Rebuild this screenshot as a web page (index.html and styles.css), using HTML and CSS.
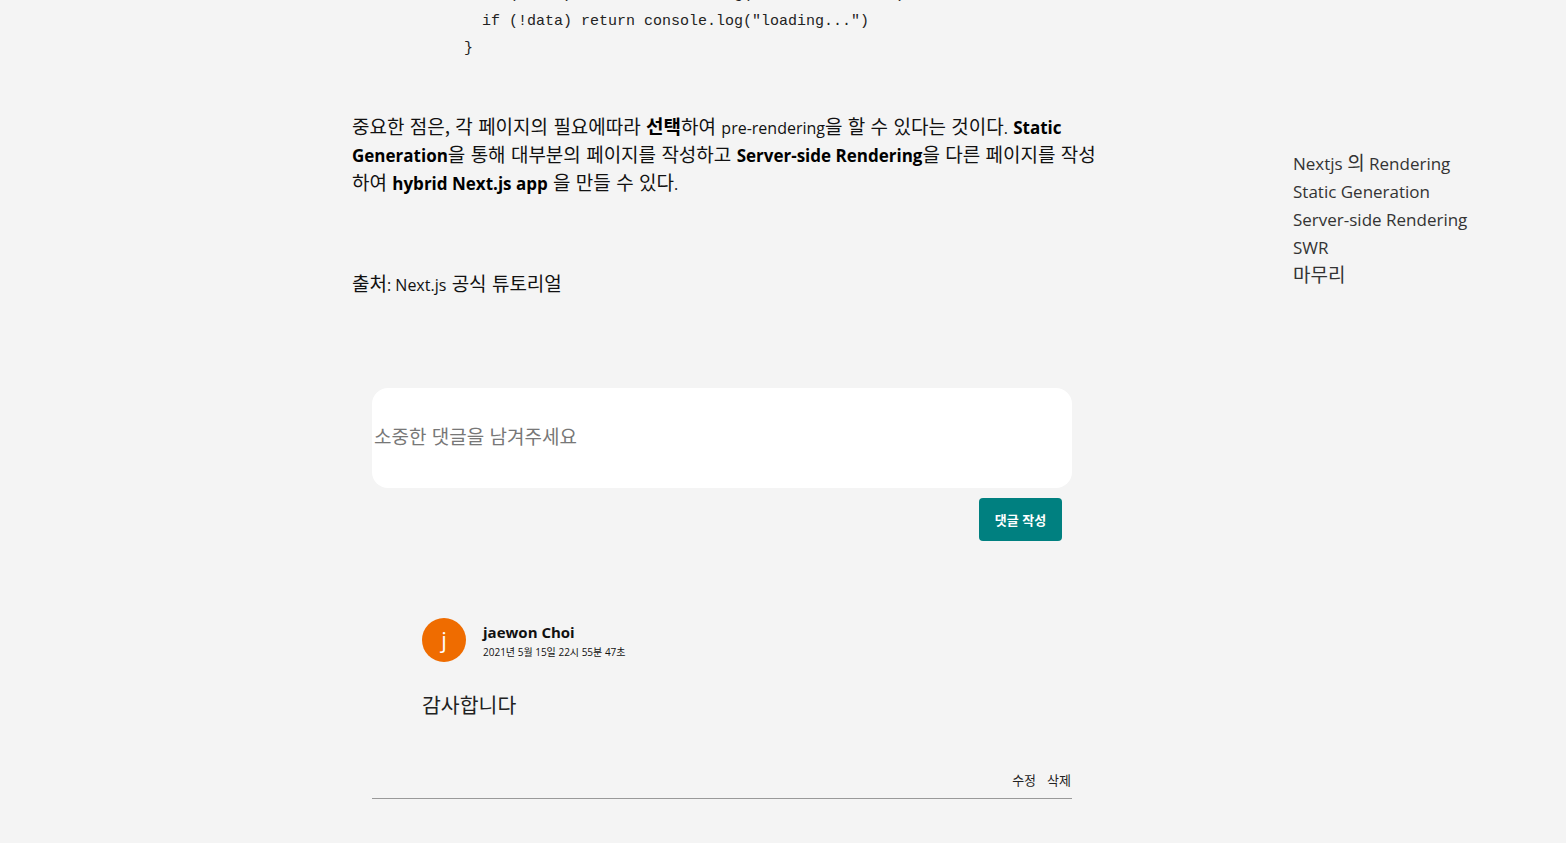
FILE: index.html
```html
<!DOCTYPE html>
<html lang="ko">
<head>
<meta charset="utf-8">
<title>Next.js Rendering</title>
<link rel="stylesheet" href="styles.css">
</head>
<body>
<div class="layout">
  <main class="main">
    <pre class="code">  if (error) return console.log("failed to load")
  if (!data) return console.log("loading...")
}</pre>
    <p class="para">중요한 점은, 각 페이지의 필요에따라 <strong>선택</strong>하여 <span class="en">pre-rendering</span>을 할 수 있다는 것이다<span class="en">.</span> <strong class="en">Static Generation</strong>을 통해 대부분의 페이지를 작성하고 <strong class="en">Server-side Rendering</strong>을 다른 페이지를 작성하여 <strong class="en">hybrid Next.js app</strong> 을 만들 수 있다<span class="en">.</span></p>
    <p class="para source">출처<span class="en">: Next.js</span> 공식 튜토리얼</p>

    <section class="comments">
      <textarea class="comment-input" placeholder="소중한 댓글을 남겨주세요"></textarea>
      <div class="submit-row">
        <button class="submit-btn">댓글 작성</button>
      </div>

      <div class="comment">
        <div class="comment-head">
          <div class="avatar">j</div>
          <div class="meta">
            <div class="author">jaewon Choi</div>
            <div class="date">2021년 5월 15일 22시 55분 47초</div>
          </div>
        </div>
        <div class="comment-body">감사합니다</div>
        <div class="comment-actions">
          <span>수정</span>
          <span>삭제</span>
        </div>
      </div>
    </section>
  </main>
  <aside class="toc">
    <a>Nextjs <span class="ko">의</span> Rendering</a>
    <a>Static Generation</a>
    <a>Server-side Rendering</a>
    <a>SWR</a>
    <a><span class="ko">마무리</span></a>
  </aside>
</div>
</body>
</html>
```
FILE: styles.css
```css
html, body {
  margin: 0;
  padding: 0;
  background: #f4f4f4;
  color: #222;
  font-family: "Open Sans", "Noto Sans CJK KR", sans-serif;
  overflow: hidden;
}

.layout {
  display: flex;
  padding-left: 352px;
}

.main {
  width: 760px;
  flex: none;
}

.code {
  margin: -19px 0 0 0;
  padding: 0 0 0 112px;
  font-family: "Liberation Mono", monospace;
  font-size: 15px;
  line-height: 27px;
  color: #222;
}

.para {
  margin: 50px 0 0 0;
  font-family: "Noto Sans CJK KR", sans-serif;
  font-size: 19px;
  line-height: 28px;
  color: #111;
}

.para .en,
.para strong {
  line-height: 1;
}

.para .en {
  font-family: "Open Sans", sans-serif;
  font-size: 16px;
}

.para strong {
  font-weight: 700;
  color: #000;
}

.para strong.en {
  font-size: 17px;
}

.source {
  margin-top: 73px;
}

.comments {
  margin: 91px 0 0 20px;
  width: 700px;
}

.comment-input {
  display: block;
  box-sizing: border-box;
  width: 700px;
  height: 100px;
  border: none;
  border-radius: 16px;
  background: #fff;
  padding: 34px 2px 0;
  font-family: "Noto Sans CJK KR", sans-serif;
  font-size: 19px;
  resize: none;
  outline: none;
}

.comment-input::placeholder {
  color: #777;
}

.submit-row {
  display: flex;
  justify-content: flex-end;
  padding: 10px 10px 0 0;
}

.submit-btn {
  width: 83px;
  height: 43px;
  border: none;
  border-radius: 4px;
  background: #008080;
  color: #fff;
  font-family: "Noto Sans CJK KR", sans-serif;
  font-weight: 700;
  font-size: 13px;
}

.comment {
  margin-top: 77px;
}

.comment-head {
  display: flex;
  align-items: center;
  padding-left: 50px;
  gap: 17px;
}

.avatar {
  width: 44px;
  height: 44px;
  border-radius: 50%;
  background: #ef6c00;
  color: #fff;
  font-size: 22px;
  line-height: 42px;
  text-align: center;
  flex: none;
}

.meta {
  display: flex;
  flex-direction: column;
  gap: 4px;
}

.author {
  font-weight: 700;
  font-size: 15px;
  line-height: 20px;
  color: #111;
}

.date {
  font-size: 10px;
  line-height: 13px;
  color: #111;
}

.comment-body {
  padding-left: 50px;
  margin-top: 28px;
  font-family: "Noto Sans CJK KR", sans-serif;
  font-size: 20.5px;
  line-height: 28px;
  color: #222;
}

.comment-actions {
  display: flex;
  justify-content: flex-end;
  gap: 11px;
  margin-top: 54px;
  padding: 0 1px 10px 0;
  border-bottom: 1px solid #999;
  font-family: "Noto Sans CJK KR", sans-serif;
  font-size: 13px;
  line-height: 16px;
  color: #222;
}

.toc {
  margin-left: 181px;
  padding-top: 150px;
  display: flex;
  flex-direction: column;
  font-size: 17px;
  line-height: 28px;
  color: #333;
}

.toc a {
  display: block;
  white-space: nowrap;
}

.toc .ko {
  font-family: "Noto Sans CJK KR", sans-serif;
  font-size: 19px;
  line-height: 1;
}
```
